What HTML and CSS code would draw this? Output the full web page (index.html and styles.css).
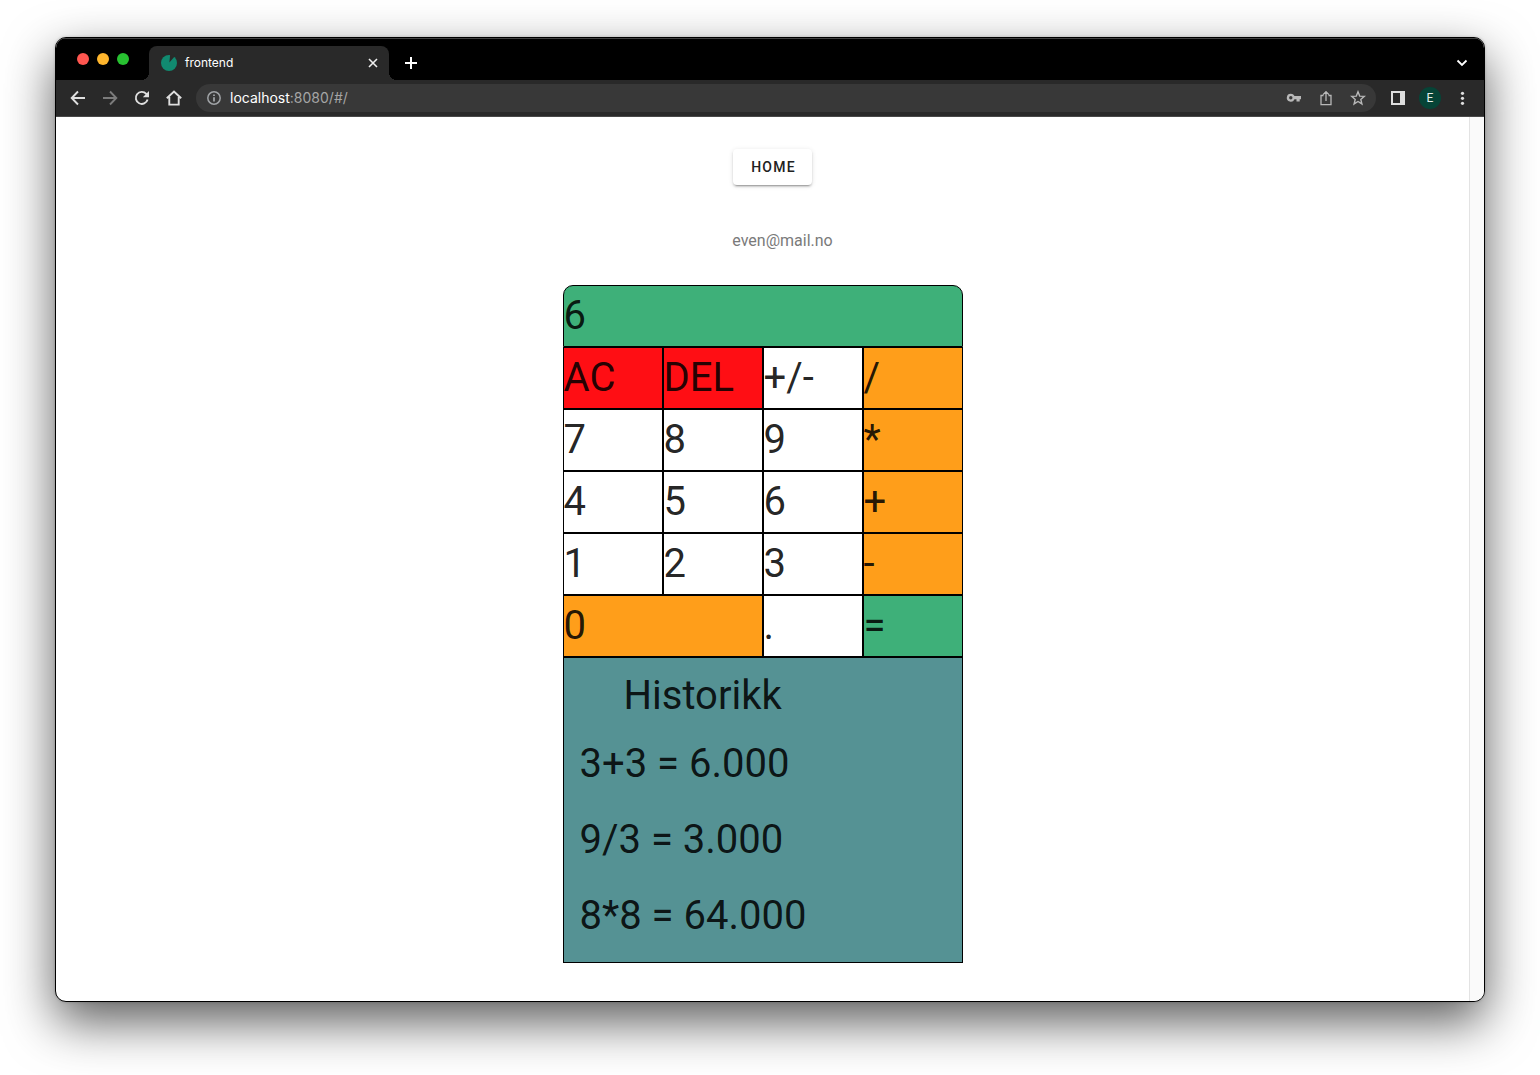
FILE: index.html
```html
<!DOCTYPE html>
<html lang="no">
<head>
<meta charset="utf-8">
<title>frontend</title>
<link rel="stylesheet" href="styles.css">
</head>
<body>
<div class="window">
  <header class="tabs">
    <div class="lights"><span class="light red"></span><span class="light yellow"></span><span class="light green"></span></div>
    <div class="tab">
      <svg class="favicon" width="16" height="16" viewBox="0 0 16 16"><circle cx="8" cy="8" r="8" fill="#118a70"/><path d="M8.400 7.500L9.200 -1H13L13.600 1.600Z" fill="#292929"/></svg>
      <span class="tab-title">frontend</span>
      <button class="icon-btn close" aria-label="Close tab"><svg width="10" height="10" viewBox="0 0 10 10"><path d="M1 1L9 9M9 1L1 9" stroke="#eee" stroke-width="1.600"/></svg></button>
    </div>
    <button class="icon-btn add" aria-label="New tab"><svg width="12" height="12" viewBox="0 0 12 12"><path d="M6 0V12M0 6H12" stroke="#fff" stroke-width="2"/></svg></button>
    <button class="icon-btn more-tabs" aria-label="Search tabs"><svg width="12" height="8" viewBox="0 0 12 8"><path d="M1.500 1.500L6 6L10.500 1.500" fill="none" stroke="#fff" stroke-width="1.800"/></svg></button>
  </header>
  <nav class="toolbar">
    <button class="icon-btn" aria-label="Back"><svg width="16" height="16" viewBox="0 0 16 16"><path d="M15 8H2M8 1.500L1.700 8L8 14.500" fill="none" stroke="#dedede" stroke-width="1.900"/></svg></button>
    <button class="icon-btn" aria-label="Forward"><svg width="16" height="16" viewBox="0 0 16 16"><path d="M1 8H14M8 1.500L14.300 8L8 14.500" fill="none" stroke="#7b7b7b" stroke-width="1.900"/></svg></button>
    <button class="icon-btn" aria-label="Reload"><svg width="16" height="16" viewBox="0 0 16 16"><path d="M13.600 9.500A6 6 0 1 1 12.300 3.900L13.500 5.200" fill="none" stroke="#dedede" stroke-width="1.900"/><path d="M15 1V7.200H8.800Z" fill="#dedede"/></svg></button>
    <button class="icon-btn" aria-label="Home"><svg width="16" height="16" viewBox="0 0 16 16"><path d="M.8 8.300L8 1.500L15.200 8.300M3.300 7V14.600H12.700V7" fill="none" stroke="#dedede" stroke-width="1.900"/></svg></button>
    <div class="address">
      <svg width="14" height="14" viewBox="0 0 14 14"><circle cx="7" cy="7" r="6.200" fill="none" stroke="#a0a3a6" stroke-width="1.500"/><path d="M7 6.200V10.500M7 3.400V5" stroke="#a0a3a6" stroke-width="1.800"/></svg>
      <span class="url"><span class="host">localhost</span>:8080/#/</span>
      <button class="icon-btn" aria-label="Passwords"><svg width="16" height="16" viewBox="0 0 16 16"><path fill-rule="evenodd" d="M4.800 3.700A4 4 0 0 1 8.500 6H15V9.200H13.700V11.600H10.500V9.200H8.500A4 4 0 1 1 4.800 3.700ZM4.800 6A1.700 1.700 0 1 0 4.800 9.400A1.700 1.700 0 1 0 4.800 6Z" fill="#b8b8b8"/></svg></button>
      <button class="icon-btn" aria-label="Share"><svg width="16" height="16" viewBox="0 0 16 16"><path d="M5.500 5.500H3V14.600H13V5.500H10.500M8 11V2M5 4.600L8 1.700L11 4.600" fill="none" stroke="#b8b8b8" stroke-width="1.300"/></svg></button>
      <button class="icon-btn" aria-label="Bookmark"><svg width="16" height="16" viewBox="0 0 16 16"><path d="M8 1.800L9.700 6.100L14.300 6.400L10.800 9.400L11.900 13.900L8 11.500L4.100 13.900L5.200 9.400L1.700 6.400L6.300 6.100Z" fill="none" stroke="#b8b8b8" stroke-width="1.400"/></svg></button>
    </div>
    <button class="icon-btn" aria-label="Side panel"><svg width="16" height="16" viewBox="0 0 16 16"><path fill-rule="evenodd" d="M1 1H15V15H1ZM3 3V13H10V3Z" fill="#dedede"/></svg></button>
    <button class="avatar" aria-label="Profile">E</button>
    <button class="icon-btn" aria-label="Menu"><svg width="16" height="16" viewBox="0 0 16 16"><g fill="#dedede"><circle cx="8.500" cy="3.300" r="1.600"/><circle cx="8.500" cy="8.300" r="1.600"/><circle cx="8.500" cy="13.300" r="1.600"/></g></svg></button>
  </nav>
  <div class="page">
    <main class="content">
      <button class="home">HOME</button>
      <p class="user">even@mail.no</p>
      <section class="calculator">
        <output class="cell display">6</output>
        <button class="cell clear">AC</button><button class="cell clear">DEL</button><button class="cell">+/-</button><button class="cell operator">/</button>
        <button class="cell">7</button><button class="cell">8</button><button class="cell">9</button><button class="cell operator">*</button>
        <button class="cell">4</button><button class="cell">5</button><button class="cell">6</button><button class="cell operator">+</button>
        <button class="cell">1</button><button class="cell">2</button><button class="cell">3</button><button class="cell operator">-</button>
        <button class="cell operator zero">0</button><button class="cell">.</button><button class="cell equals">=</button>
        <div class="history">
          <h2>Historikk</h2>
          <ul>
            <li>3+3 = 6.000</li>
            <li>9/3 = 3.000</li>
            <li>8*8 = 64.000</li>
          </ul>
        </div>
      </section>
    </main>
    <div class="scrollbar"></div>
  </div>
</div>
</body>
</html>
```
FILE: styles.css
```css
* { box-sizing: border-box; }
body {
  margin: 0;
  min-height: 100vh;
  padding: 37px 55px 73px;
  display: flex;
  background: #fff;
  font-family: Roboto, sans-serif;
  color: #212121;
}
button { font: inherit; color: inherit; border: 0; margin: 0; padding: 0; background: none; }
svg { display: block; }
.window {
  flex: 1;
  min-width: 0;
  display: flex;
  flex-direction: column;
  border: 1px solid #000;
  border-radius: 11px;
  overflow: hidden;
  background: #fff;
  box-shadow: 0 20px 50px rgba(0, 0, 0, .64), 0 0 3px rgba(0, 0, 0, .2);
}

/* tab strip */
.tabs {
  display: flex;
  align-items: center;
  height: 42px;
  background: #000;
  border-top: 1px solid #424242;
}
.lights { display: flex; gap: 8px; width: 93px; padding: 0 0 2px 21px; }
.light { width: 12px; height: 12px; border-radius: 50%; }
.red { background: #ff5650; }
.yellow { background: #ffb62d; }
.green { background: #28c131; }
.tab {
  position: relative;
  display: flex;
  align-items: center;
  align-self: flex-end;
  gap: 8px;
  width: 240px;
  height: 34px;
  padding: 0 8px 0 12px;
  border-radius: 8px 8px 0 0;
  background: #292929;
}
.tab::before, .tab::after {
  content: "";
  position: absolute;
  bottom: 0;
  width: 8px;
  height: 8px;
}
.tab::before { right: 100%; background: radial-gradient(circle at 0 0, transparent 8px, #292929 8px); }
.tab::after { left: 100%; background: radial-gradient(circle at 100% 0, transparent 8px, #292929 8px); }
.tab-title { flex: 1; font: 12px/16px Inter, sans-serif; color: #fff; }
.icon-btn { display: flex; align-items: center; justify-content: center; width: 16px; height: 16px; flex: none; }
.add { margin: 6px 0 0 14px; }
.more-tabs { margin: 6px 14px 0 auto; }

/* toolbar */
.toolbar {
  display: flex;
  align-items: center;
  gap: 16px;
  height: 37px;
  padding: 0 14px;
  background: #292929;
  border-bottom: 1px solid #484848;
}
.address {
  flex: 1;
  display: flex;
  align-items: center;
  gap: 16px;
  height: 28px;
  margin: 0 -2px;
  padding: 0 10px 0 11px;
  border-radius: 14px;
  background: #383838;
}
.url { flex: 1; margin-left: -7px; font: 14px/20px Inter, sans-serif; color: #a5a5a5; }
.host { color: #fff; }
.avatar {
  width: 22px;
  height: 22px;
  margin: 0 -3px;
  border-radius: 50%;
  background: #064437;
  color: #e6eeec;
  font-size: 12px;
  line-height: 22px;
}

/* page */
.page { flex: 1; display: flex; }
.content { flex: 1; display: flex; flex-direction: column; align-items: center; padding: 32px 0 38px; }
.scrollbar { width: 15px; background: #fafafa; border-left: 1px solid #e3e3e3; }
.home {
  height: 36px;
  padding: 0 16px 0 18px;
  margin-left: 20px;
  border-radius: 4px;
  background: #fff;
  font-size: 14px;
  font-weight: 500;
  letter-spacing: 1.25px;
  box-shadow: 0 3px 1px -2px rgba(0, 0, 0, .2), 0 2px 2px rgba(0, 0, 0, .14), 0 1px 5px rgba(0, 0, 0, .12);
}
.user { margin: 44px 0 32px 40px; font-size: 16px; line-height: 24px; color: #7a7a7a; }
.calculator {
  display: grid;
  grid-template-columns: repeat(4, 100px);
  font-size: 40px;
  line-height: 60px;
  color: rgba(0, 0, 0, .87);
}
.cell { height: 62px; border: 1px solid #000; text-align: left; background: #fff; }
.display { grid-column: 1 / -1; border-radius: 10px 10px 0 0; background: #3eb079; }
.clear { background: #ff0e14; }
.operator { background: #ff9e1a; }
.zero { grid-column: span 2; }
.equals { background: #3eb079; }
.history { grid-column: 1 / -1; padding: 8px 0; border: 1px solid #000; background: #559294; }
.history h2 { margin: 0; padding-left: 60px; font: inherit; }
.history ul { margin: 0; padding: 0; list-style: none; }
.history li { padding: 8px 16px; }
```
